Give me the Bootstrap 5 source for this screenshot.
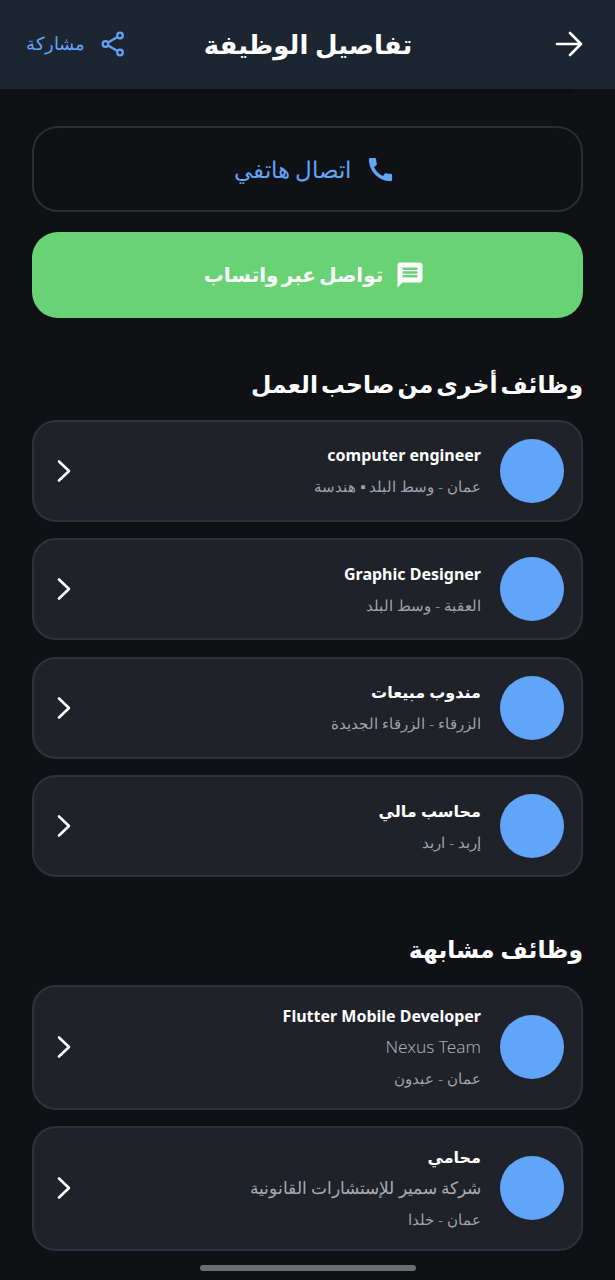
<!DOCTYPE html>
<html lang="ar" dir="rtl">
<head>
<meta charset="utf-8">
<title>تفاصيل الوظيفة</title>
<link href="https://cdn.jsdelivr.net/npm/bootstrap@5.3.0/dist/css/bootstrap.min.css" rel="stylesheet">
<style>
html,body{height:1280px;overflow:hidden}
body{background:#0f1115;color:#fff;font-family:"Noto Sans","DejaVu Sans",sans-serif}
.topbar{height:89px;background:#1c2530;padding:0 31px 2px 26px}
.topbar-side{flex:1 1 0}
.topbar-back{width:30px;height:30px}
.topbar-title{font-size:26px;font-weight:700;line-height:1;margin-left:6px}
.share-text{font-size:18px;font-weight:300;color:#60a5fa}
.peek{height:4px;margin:0 41px;background:#0b0d10;border-radius:0 0 14px 14px}
.page-body{padding:33px 32px 0}
.action-btn{height:86px;border-radius:26px;padding-left:14px}
.action-call{border:2px solid #2b2e35;color:#60a5fa;background:transparent;margin-bottom:19.5px;font-size:23px;font-weight:300;gap:13px}
.action-wa{background:#68d274;color:#fff;font-weight:700;font-size:20px;word-spacing:-2px;gap:12px}
.section-title{font-size:23.5px;font-weight:700;line-height:36px;margin:48px 0 18px;word-spacing:-3px}
.section-title.second{margin-top:54px;word-spacing:0}
.job-row{background:#1f2229;border:2px solid #2e323a;border-radius:24px;padding:0 17px 0 21px;margin-bottom:16.5px;height:102px}
.job-row.tall{height:124.5px}
.job-dot{width:64px;height:64px;border-radius:50%;background:#60a5fa;flex:none}
.job-name{font-size:16px;font-weight:700;line-height:24px}
.job-co{font-size:17.3px;font-weight:300;color:#a8abb2;line-height:30px;margin:4px 0}
.job-loc{font-size:15px;font-weight:300;color:#a0a3aa;line-height:24px}
.job-loc.spaced{margin-top:7px}
.job-info{padding-inline:19px}
.job-chev{flex:none}
.home-bar{position:fixed;left:200px;bottom:9px;width:216px;height:6px;border-radius:3px;background:#6b6c70}
</style>
</head>
<body>
<header class="topbar d-flex align-items-center">
  <div class="topbar-side d-flex">
    <svg class="topbar-back" viewBox="0 0 30 30" fill="none" stroke="#fff" stroke-width="2.6" stroke-linecap="round" stroke-linejoin="round"><path d="M3 15H27M16 4L27 15L16 26"/></svg>
  </div>
  <div class="topbar-title">تفاصيل الوظيفة</div>
  <div class="topbar-side d-flex align-items-center justify-content-end gap-3">
    <svg width="26" height="26" viewBox="0 0 26 26" fill="none" stroke="#60a5fa" stroke-width="2.2"><circle cx="19" cy="4.500" r="2.800"/><circle cx="4.500" cy="13" r="2.800"/><circle cx="19" cy="21.500" r="2.800"/><path d="M7 11.500L16.500 6M7 14.500L16.500 20"/></svg>
    <span class="share-text">مشاركة</span>
  </div>
</header>
<div class="peek"></div>
<main class="page-body">
  <div class="action-btn action-call d-flex align-items-center justify-content-center">
    <svg width="31" height="31" viewBox="0 0 24 24" fill="#60a5fa"><path d="M20.010 15.380c-1.230 0-2.420-.2-3.530-.56a.977.977 0 0 0-1.010.24l-1.570 1.970c-2.830-1.350-5.480-3.900-6.890-6.830l1.950-1.660c.27-.28.35-.67.24-1.020-.37-1.110-.56-2.300-.56-3.530 0-.54-.45-.99-.99-.99H4.190C3.650 3 3 3.240 3 3.990 3 13.280 10.730 21 20.010 21c.71 0 .99-.63.99-1.180v-3.450c0-.54-.45-.99-.99-.99z"/></svg>
    <span>اتصال هاتفي</span>
  </div>
  <div class="action-wa action-btn d-flex align-items-center justify-content-center">
    <svg width="30" height="30" viewBox="0 0 24 24" fill="#fff"><path d="M20 2H4c-1.100 0-1.990.9-1.990 2L2 22l4-4h14c1.100 0 2-.9 2-2V4c0-1.100-.9-2-2-2zm-2 12H6v-2h12v2zm0-3H6V9h12v2zm0-3H6V6h12v2z"/></svg>
    <span>تواصل عبر واتساب</span>
  </div>

  <h2 class="section-title">وظائف أخرى من صاحب العمل</h2>
  <div class="job-row d-flex align-items-center">
    <div class="job-dot"></div>
    <div class="job-info flex-grow-1">
      <div class="job-name">computer engineer</div>
      <div class="job-loc spaced">عمان - وسط البلد ▪ هندسة</div>
    </div>
    <svg class="job-chev" width="16" height="24" viewBox="0 0 16 24" fill="none" stroke="#fff" stroke-width="2.6" stroke-linecap="round" stroke-linejoin="round"><path d="M4 2.500L14 12L4 21.500"/></svg>
  </div>
  <div class="job-row d-flex align-items-center">
    <div class="job-dot"></div>
    <div class="job-info flex-grow-1">
      <div class="job-name">Graphic Designer</div>
      <div class="job-loc spaced">العقبة - وسط البلد</div>
    </div>
    <svg class="job-chev" width="16" height="24" viewBox="0 0 16 24" fill="none" stroke="#fff" stroke-width="2.6" stroke-linecap="round" stroke-linejoin="round"><path d="M4 2.500L14 12L4 21.500"/></svg>
  </div>
  <div class="job-row d-flex align-items-center">
    <div class="job-dot"></div>
    <div class="job-info flex-grow-1">
      <div class="job-name">مندوب مبيعات</div>
      <div class="job-loc spaced">الزرقاء - الزرقاء الجديدة</div>
    </div>
    <svg class="job-chev" width="16" height="24" viewBox="0 0 16 24" fill="none" stroke="#fff" stroke-width="2.6" stroke-linecap="round" stroke-linejoin="round"><path d="M4 2.500L14 12L4 21.500"/></svg>
  </div>
  <div class="job-row d-flex align-items-center">
    <div class="job-dot"></div>
    <div class="job-info flex-grow-1">
      <div class="job-name">محاسب مالي</div>
      <div class="job-loc spaced">إربد - اربد</div>
    </div>
    <svg class="job-chev" width="16" height="24" viewBox="0 0 16 24" fill="none" stroke="#fff" stroke-width="2.6" stroke-linecap="round" stroke-linejoin="round"><path d="M4 2.500L14 12L4 21.500"/></svg>
  </div>

  <h2 class="section-title second">وظائف مشابهة</h2>
  <div class="job-row tall d-flex align-items-center">
    <div class="job-dot"></div>
    <div class="job-info flex-grow-1">
      <div class="job-name">Flutter Mobile Developer</div>
      <div class="job-co">Nexus Team</div>
      <div class="job-loc">عمان - عبدون</div>
    </div>
    <svg class="job-chev" width="16" height="24" viewBox="0 0 16 24" fill="none" stroke="#fff" stroke-width="2.6" stroke-linecap="round" stroke-linejoin="round"><path d="M4 2.500L14 12L4 21.500"/></svg>
  </div>
  <div class="job-row tall d-flex align-items-center">
    <div class="job-dot"></div>
    <div class="job-info flex-grow-1">
      <div class="job-name">محامي</div>
      <div class="job-co">شركة سمير للإستشارات القانونية</div>
      <div class="job-loc">عمان - خلدا</div>
    </div>
    <svg class="job-chev" width="16" height="24" viewBox="0 0 16 24" fill="none" stroke="#fff" stroke-width="2.6" stroke-linecap="round" stroke-linejoin="round"><path d="M4 2.500L14 12L4 21.500"/></svg>
  </div>
</main>
<div class="home-bar"></div>
</body>
</html>
